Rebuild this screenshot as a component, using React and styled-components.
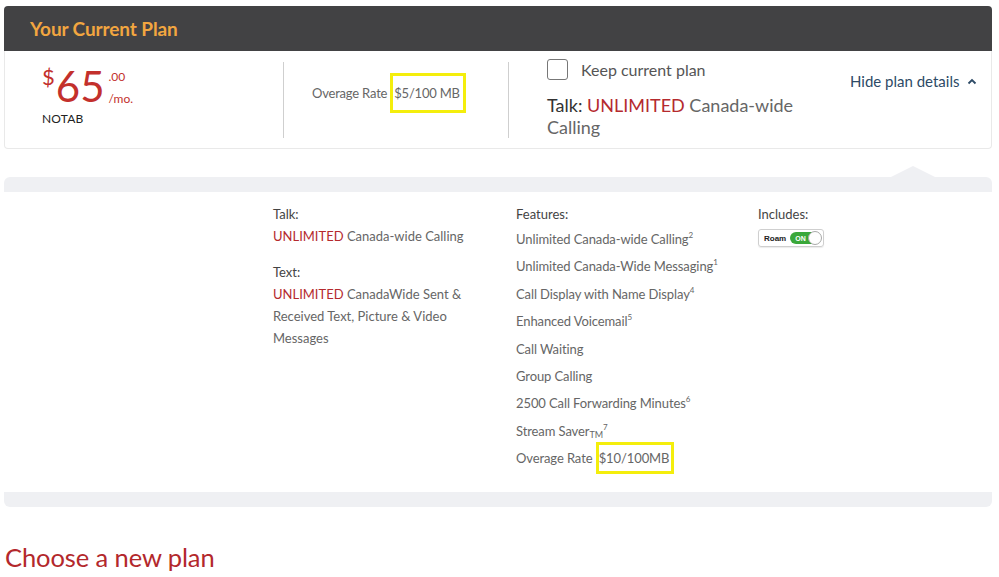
import React from "react";
import styled, { createGlobalStyle } from "styled-components";

const GlobalStyle = createGlobalStyle`
  html, body {
    margin: 0;
    padding: 0;
    background: #fff;
  }
  body {
    font-family: Lato, "Open Sans", "Liberation Sans", sans-serif;
    color: #666;
  }
`;

const Page = styled.div`
  padding: 6px 7px 0 4px;
`;

const Header = styled.header`
  height: 45px;
  background: #424244;
  border-radius: 4px 4px 0 0;
  display: flex;
  align-items: center;
  padding-left: 26px;

  & h1 {
    margin: 0;
    color: #f2a640;
    font-size: 19px;
    font-weight: 700;
    letter-spacing: -0.1px;
  }
`;

const Card = styled.section`
  display: flex;
  align-items: center;
  height: 97px;
  border: 1px solid #e9e9e9;
  border-top: none;
  border-radius: 0 0 4px 4px;
`;

const PriceCol = styled.div`
  width: 241px;
  padding-left: 37px;
  align-self: flex-start;
  padding-top: 14px;
`;

const Price = styled.div`
  display: flex;
  color: #c3302c;
`;

const Dollar = styled.span`
  font-size: 22px;
  line-height: 22px;
  margin-top: 1px;
`;

const Amount = styled.span`
  font-size: 42px;
  line-height: 42px;
  margin-left: 1px;
`;

const Cents = styled.div`
  display: flex;
  flex-direction: column;
  margin-left: 4px;
  font-size: 12px;
  line-height: 12px;

  & span:first-child {
    margin-top: 6px;
  }
  & span:last-child {
    margin-top: 10px;
  }
`;

const PlanCode = styled.div`
  font-size: 12px;
  color: #222;
  margin-top: 4px;
  letter-spacing: 0.2px;
`;

const Divider = styled.div`
  width: 1px;
  height: 76px;
  background: #cfcfcf;
`;

const OverageCol = styled.div`
  width: 196px;
  padding-left: 28px;
  padding-bottom: 14px;
  font-size: 13px;
  letter-spacing: -0.2px;
  color: #666;
`;

const Highlight = styled.span`
  border: 3px solid #f4ee0c;
  padding: ${(p) => (p.$big ? "9px 3px 9px 1px" : "5px 2px 5px 0")};
  margin-left: ${(p) => (p.$big ? "3px" : "0")};
`;

const KeepCol = styled.div`
  width: 264px;
  padding-left: 38px;
  align-self: flex-start;
  padding-top: 16px;
`;

const CheckRow = styled.label`
  display: flex;
  align-items: center;
  gap: 13px;
  font-size: 16px;
  color: #555;
  margin-bottom: 14px;

  & span {
    margin-top: -8px;
  }
`;

const Checkbox = styled.span`
  width: 19px;
  height: 19px;
  border: 1.5px solid #777;
  border-radius: 3px;
`;

const TalkLine = styled.div`
  font-size: 18px;
  line-height: 22px;
  color: #666;

  & b {
    font-weight: 400;
    color: #333;
  }
  & em {
    font-style: normal;
    color: #b52a2e;
  }
`;

const HideLink = styled.a`
  align-self: flex-start;
  margin-top: 21px;
  margin-left: 39px;
  display: flex;
  align-items: center;
  gap: 8px;
  font-size: 15px;
  color: #2d4a66;
  cursor: pointer;
`;

const Details = styled.section`
  position: relative;
  margin-top: 28px;
  background: #eff0f3;
  padding: 15px 0;
  border-radius: 6px;

  &::before {
    content: "";
    position: absolute;
    top: -11px;
    left: 887px;
    border-left: 22px solid transparent;
    border-right: 22px solid transparent;
    border-bottom: 11px solid #eff0f3;
  }
`;

const DetailsBody = styled.div`
  background: #fff;
  height: 300px;
  box-sizing: border-box;
  padding: 11px 0 0 269px;
  display: grid;
  grid-template-columns: 243px 242px 1fr;
`;

const Col = styled.div`
  font-size: 13px;
`;

const ColTitle = styled.div`
  color: #444;
  line-height: 22px;
`;

const Para = styled.p`
  margin: 0 0 14px;
  line-height: 22px;
  width: 205px;
  color: #666;

  & em {
    font-style: normal;
    color: #b52a2e;
  }
`;

const FeatureList = styled.ul`
  list-style: none;
  margin: 1px 0 0;
  padding: 0;

  & li {
    line-height: 27.4px;
    color: #666;
    white-space: nowrap;
    letter-spacing: -0.1px;
  }
  & sup {
    font-size: 8px;
    vertical-align: 6px;
    line-height: 0;
  }
  & sub {
    font-size: 9px;
    vertical-align: -2px;
    line-height: 0;
  }
`;

const Roam = styled.div`
  display: inline-flex;
  align-items: center;
  gap: 4px;
  margin-top: 4px;
  padding: 2px 2px 2px 5px;
  border: 1px solid #cfcfcf;
  border-radius: 3px;
  box-shadow: 0 1px 1px rgba(0, 0, 0, 0.08);
  font-family: "Liberation Sans", Arial, sans-serif;
  font-size: 8px;
  font-weight: 700;
  color: #222;
`;

const Switch = styled.span`
  display: flex;
  align-items: center;
  width: 31px;
  height: 12px;
  border-radius: 7px;
  background: #3aa83a;
  color: #fff;
  font-size: 7px;
  padding-left: 5px;
  box-sizing: border-box;
  position: relative;

  &::after {
    content: "";
    position: absolute;
    right: -1px;
    top: -1px;
    width: 12px;
    height: 12px;
    border-radius: 50%;
    background: #fff;
    border: 1px solid #aaa;
  }
`;

const NewPlanTitle = styled.h2`
  margin: 35px 0 0 1px;
  font-size: 25.5px;
  font-weight: 400;
  color: #b3282c;
  letter-spacing: -0.1px;
`;

const features = [
  ["Unlimited Canada-wide Calling", "2"],
  ["Unlimited Canada-Wide Messaging", "1"],
  ["Call Display with Name Display", "4"],
  ["Enhanced Voicemail", "5"],
  ["Call Waiting"],
  ["Group Calling"],
  ["2500 Call Forwarding Minutes", "6"],
];

const Chevron = () => (
  <svg width="10" height="7" viewBox="0 0 10 7" fill="none">
    <path d="M1.5 5.5L5 2L8.5 5.5" stroke="#2d4a66" strokeWidth="1.8" />
  </svg>
);

export default function App() {
  return (
    <Page>
      <GlobalStyle />
      <Header>
        <h1>Your Current Plan</h1>
      </Header>
      <Card>
        <PriceCol>
          <Price>
            <Dollar>$</Dollar>
            <Amount>65</Amount>
            <Cents>
              <span>.00</span>
              <span>/mo.</span>
            </Cents>
          </Price>
          <PlanCode>NOTAB</PlanCode>
        </PriceCol>
        <Divider />
        <OverageCol>
          Overage Rate<Highlight $big>$5/100 MB</Highlight>
        </OverageCol>
        <Divider />
        <KeepCol>
          <CheckRow>
            <Checkbox />
            <span>Keep current plan</span>
          </CheckRow>
          <TalkLine>
            <b>Talk:</b> <em>UNLIMITED</em> Canada-wide Calling
          </TalkLine>
        </KeepCol>
        <HideLink>
          Hide plan details <Chevron />
        </HideLink>
      </Card>
      <Details>
        <DetailsBody>
          <Col>
            <ColTitle>Talk:</ColTitle>
            <Para>
              <em>UNLIMITED</em> Canada-wide Calling
            </Para>
            <ColTitle>Text:</ColTitle>
            <Para>
              <em>UNLIMITED</em> CanadaWide Sent &amp; Received Text, Picture
              &amp; Video Messages
            </Para>
          </Col>
          <Col>
            <ColTitle>Features:</ColTitle>
            <FeatureList>
              {features.map(([name, note]) => (
                <li key={name}>
                  {name}
                  {note && <sup>{note}</sup>}
                </li>
              ))}
              <li>
                Stream Saver<sub>TM</sub>
                <sup>7</sup>
              </li>
              <li>
                Overage Rate <Highlight>$10/100MB</Highlight>
              </li>
            </FeatureList>
          </Col>
          <Col>
            <ColTitle>Includes:</ColTitle>
            <Roam>
              Roam
              <Switch>ON</Switch>
            </Roam>
          </Col>
        </DetailsBody>
      </Details>
      <NewPlanTitle>Choose a new plan</NewPlanTitle>
    </Page>
  );
}
